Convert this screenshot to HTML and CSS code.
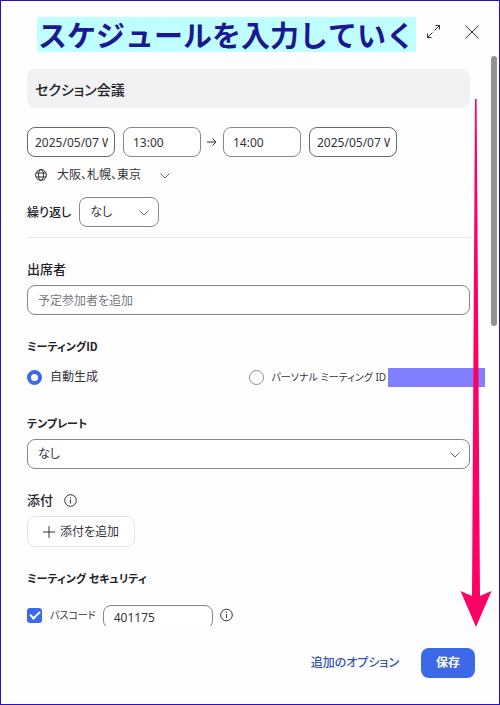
FILE: index.html
```html
<!DOCTYPE html>
<html lang="ja">
<head>
    <meta charset="UTF-8">
    <meta name="viewport" content="width=device-width, initial-scale=1.0">
    <title>スケジュール</title>
    <link rel="stylesheet" href="styles.css">
</head>
<body>
    <div class="dialog">
        <header class="dialog-header">
            <h1 class="caption">スケジュールを入力していく</h1>
            <button class="icon-button" type="button" aria-label="拡大">
                <svg width="15" height="15" viewBox="0 0 15 15"><path d="M9.5 1.5h4v4M13.5 1.5L8.500 6.500M5.5 13.5h-4v-4M1.5 13.5l5-5"/></svg>
            </button>
            <button class="icon-button close" type="button" aria-label="閉じる">
                <svg width="14" height="14" viewBox="0 0 14 14"><path d="M.5.5l13 13M13.5.5l-13 13"/></svg>
            </button>
        </header>

        <form class="dialog-body" id="schedule">
            <input class="topic" type="text" value="セクション会議" aria-label="トピック">

            <div class="time-row">
                <input class="field date" type="text" value="2025/05/07 Wed" aria-label="開始日">
                <input class="field time" type="text" value="13:00" aria-label="開始時刻">
                <svg class="to" width="10" height="10" viewBox="0 0 10 10"><path d="M0 5h9M5.5 1.5L9 5 5.5 8.5"/></svg>
                <input class="field time" type="text" value="14:00" aria-label="終了時刻">
                <input class="field date end" type="text" value="2025/05/07 Wed" aria-label="終了日">
            </div>

            <div class="zone-row">
                <svg width="12" height="12" viewBox="0 0 12 12"><circle cx="6" cy="6" r="5.4"/><ellipse cx="6" cy="6" rx="2.5" ry="5.4"/><path d="M1 4h10M1 8h10"/></svg>
                <div class="select-wrap zone">
                    <select aria-label="タイムゾーン"><option>大阪、札幌、東京</option></select>
                    <svg class="chevron" width="10" height="6" viewBox="0 0 10 6"><path d="M.5.5L5 5 9.5.5"/></svg>
                </div>
            </div>

            <div class="repeat-row">
                <label class="label" for="repeat">繰り返し</label>
                <div class="select-wrap repeat">
                    <select class="field" id="repeat"><option>なし</option></select>
                    <svg class="chevron" width="10" height="6" viewBox="0 0 10 6"><path d="M.5.5L5 5 9.5.5"/></svg>
                </div>
            </div>

            <hr>

            <div class="section">
                <label class="label" for="attendees">出席者</label>
                <input class="field attendees" id="attendees" type="text" placeholder="予定参加者を追加">
            </div>

            <div class="section">
                <div class="label kana" id="id-label">ミーティングID</div>
                <div class="radios" role="radiogroup" aria-labelledby="id-label">
                    <label class="choice"><input type="radio" name="meeting-id" checked>自動生成</label>
                    <label class="choice personal"><input type="radio" name="meeting-id"><span class="choice-text">パーソナル ミーティング ID 3</span><span class="redacted"></span></label>
                </div>
            </div>

            <div class="section">
                <label class="label kana" for="template">テンプレート</label>
                <div class="select-wrap">
                    <select class="field" id="template"><option>なし</option></select>
                    <svg class="chevron" width="10" height="6" viewBox="0 0 10 6"><path d="M.5.5L5 5 9.5.5"/></svg>
                </div>
            </div>

            <div class="section">
                <div class="label with-info">添付
                    <svg class="info" width="13" height="13" viewBox="0 0 13 13"><circle cx="6.5" cy="6.5" r="5.8"/><path d="M6.5 5.5v4M6.5 3.3v1.2"/></svg>
                </div>
                <button class="attach" type="button">
                    <svg width="12" height="12" viewBox="0 0 12 12"><path d="M6 0v12M0 6h12"/></svg>添付を追加
                </button>
            </div>

            <div class="section">
                <div class="label kana">ミーティング セキュリティ</div>
                <div class="passcode-row">
                    <label class="choice"><input type="checkbox" checked><span class="choice-text">パスコード</span></label>
                    <input class="field passcode" type="text" value="401175" aria-label="パスコード">
                    <svg class="info" width="13" height="20" viewBox="0 -4 13 20"><circle cx="6.5" cy="6" r="5.8"/><path d="M6.5 5v4M6.5 2.8v1.2"/></svg>
                </div>
            </div>
        </form>

        <footer class="dialog-footer">
            <a class="more" href="#">追加のオプション</a>
            <button class="save" type="submit" form="schedule">保存</button>
        </footer>

        <div class="scroll-thumb"></div>
        <svg class="arrow" width="32" height="528" viewBox="0 0 32 528"><path d="M15 0h1.6L20 497l11.5-5L16 528 .5 492l11.5 5z"/></svg>
    </div>
</body>
</html>
```
FILE: styles.css
```css
* {
    box-sizing: border-box;
}
body {
    margin: 0;
    font-family: "Noto Sans", "Noto Sans CJK JP", sans-serif;
    font-size: 12px;
    line-height: 18px;
    font-feature-settings: "palt";
    color: #333338;
}
input, select, button {
    font: inherit;
    font-feature-settings: inherit;
    color: inherit;
    margin: 0;
}
svg {
    fill: none;
    stroke: #333338;
    flex: none;
}
.dialog {
    position: relative;
    display: flex;
    flex-direction: column;
    height: 100vh;
    border: 1px solid #2a10c8;
    background: #fefefe;
}
.dialog-header {
    display: flex;
    align-items: center;
    flex: none;
    height: 55px;
    padding: 6px 20px 0 36px;
}
.caption {
    margin: 5px auto 0 0;
    padding: 0 1px;
    background: #bfffff;
    color: #1c1894;
    font-family: "Noto Sans CJK JP", sans-serif;
    font-feature-settings: normal;
    font-kerning: none;
    font-size: 29px;
    line-height: 35px;
    font-weight: 700;
    white-space: nowrap;
}
.icon-button {
    display: flex;
    padding: 0;
    border: 0;
    background: none;
}
.close {
    margin-left: 24px;
}

/* Form */
.dialog-body {
    flex: 1;
    min-height: 0;
    overflow: hidden;
    padding: 13px 29px 0 26px;
}
.topic {
    display: block;
    width: 100%;
    height: 39px;
    padding: 0 8px;
    border: 0;
    border-radius: 8px;
    background: #f1f2f4;
    color: #222227;
    font-size: 14px;
    font-weight: 500;
}
.field {
    display: block;
    height: 30px;
    border: 1px solid #85878c;
    border-radius: 8px;
    background: #fff;
    padding: 0 10px;
    outline: 0;
}
.time-row {
    display: flex;
    align-items: center;
    margin-top: 19px;
}
.date {
    width: 88px;
    padding: 0 6px 0 7px;
    border-color: #66686d;
}
.time {
    width: 78px;
    margin-left: 8px;
    padding: 0 9px;
}
.to {
    margin: 0 -2px 0 6px;
}
.end {
    margin-left: 8px;
}
.zone-row {
    display: flex;
    align-items: center;
    gap: 10px;
    height: 24px;
    margin-top: 6px;
    padding-left: 8px;
}
.select-wrap {
    position: relative;
}
.select-wrap select {
    width: 100%;
    appearance: none;
}
.chevron {
    position: absolute;
    right: 10px;
    top: 50%;
    margin-top: -2px;
    stroke: #66686d;
    pointer-events: none;
}
.zone {
    width: 123px;
}
.zone select {
    display: block;
    padding: 0;
    border: 0;
    background: none;
}
.repeat-row {
    display: flex;
    align-items: center;
    gap: 8px;
    margin-top: 10px;
}
.repeat {
    width: 80px;
}
hr {
    height: 1px;
    margin: 10px 0 0;
    border: 0;
    background: #e8e9eb;
}
.section {
    margin-top: 22px;
}
.label {
    display: block;
    margin-bottom: 7px;
    color: #222227;
    font-family: "Noto Sans CJK JP", sans-serif;
    font-size: 13px;
    font-weight: 500;
}
.repeat-row .label {
    margin: 0;
    font-size: 12px;
}
.kana {
    font-size: 11px;
    font-weight: 700;
}
.attendees {
    width: 100%;
}
.attendees::placeholder {
    color: #777980;
    opacity: 1;
}
.radios {
    display: grid;
    grid-template-columns: 1fr 1fr;
    padding: 5px 0;
}
.choice {
    display: flex;
    align-items: center;
    gap: 8px;
    height: 20px;
    white-space: nowrap;
}
.choice input {
    appearance: none;
    flex: none;
    width: 15px;
    height: 15px;
    border: 1px solid #8a8c91;
    border-radius: 50%;
    background: #fff;
}
.choice input:checked {
    border: 4px solid #3c69e7;
}
.choice input[type="checkbox"] {
    display: grid;
    place-items: center;
    border: 0;
    border-radius: 3px;
    background: #3c69e7;
}
.choice input[type="checkbox"]::before {
    content: "";
    width: 8px;
    height: 4px;
    margin-bottom: 3px;
    border: solid #fff;
    border-width: 0 0 2px 2px;
    transform: rotate(-45deg);
}
.choice-text {
    font-size: 10px;
}
.personal {
    position: relative;
}
.redacted {
    position: absolute;
    right: -15px;
    width: 97px;
    height: 19px;
    background: #807fff;
}
.with-info {
    display: flex;
    align-items: center;
    gap: 11px;
}
.attach {
    display: flex;
    align-items: center;
    gap: 5px;
    height: 31px;
    padding: 0 15px;
    border: 1px solid #e4e5e8;
    border-radius: 8px;
    background: #fff;
}
.passcode-row {
    display: flex;
    align-items: flex-start;
    gap: 7px;
    margin-top: 18px;
}
.passcode {
    width: 110px;
    height: 24px;
}

/* Footer */
.dialog-footer {
    display: flex;
    align-items: center;
    justify-content: flex-end;
    gap: 22px;
    flex: none;
    height: 78px;
    padding: 0 24px 4px;
}
.more {
    color: #3454ad;
    font-weight: 500;
    text-decoration: none;
}
.save {
    height: 30px;
    padding: 0 15px;
    border: 0;
    border-radius: 8px;
    background: #3c69e7;
    color: #fff;
    font-weight: 700;
}

.scroll-thumb {
    position: absolute;
    top: 55px;
    right: 2px;
    width: 6px;
    height: 270px;
    border-radius: 3px;
    background: #8f9594;
}
.arrow {
    position: absolute;
    top: 98px;
    right: 7px;
    pointer-events: none;
}
.arrow path {
    fill: #ff0066;
    stroke: none;
}
```
